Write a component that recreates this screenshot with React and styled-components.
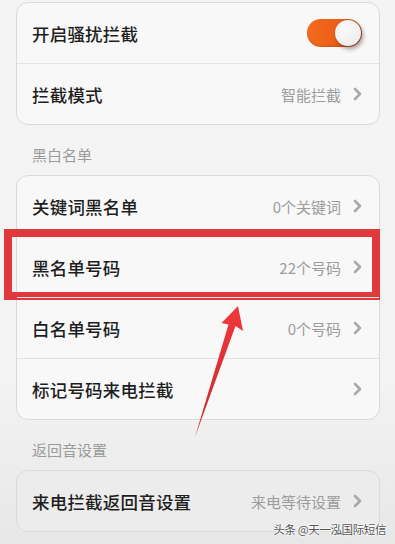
import React from 'react'
import styled, { createGlobalStyle } from 'styled-components'

const GlobalStyle = createGlobalStyle`
  html, body {
    margin: 0;
    padding: 0;
  }
  body {
    background: linear-gradient(180deg, #f4f4f4 0%, #f3f3f3 70%, #e7e7e7 100%);
    font-family: 'Noto Sans CJK SC', 'Noto Sans', sans-serif;
  }
`;

const Page = styled.div`
  position: relative;
  width: 395px;
  height: 544px;
  overflow: hidden;
  padding: 2px 15px 0 16px;
  box-sizing: border-box;
`;

const Card = styled.div`
  background: ${p => p.$tone || '#f8f8f8'};
  border: 1px solid #dadada;
  border-radius: 12px;
  display: flex;
  flex-direction: column;
`;

const Row = styled.div`
  position: relative;
  height: 60px;
  display: flex;
  align-items: center;
  justify-content: space-between;
  padding: 0 17px 0 15px;
  border-top: ${p => (p.$first ? 'none' : '1px solid #e3e3e3')};
`;

const Label = styled.span`
  font-size: 17.5px;
  font-weight: 500;
  color: #1e1e1e;
  letter-spacing: 0.2px;
`;

const Right = styled.div`
  display: flex;
  align-items: center;
  gap: 12px;
`;

const Value = styled.span`
  font-size: 15px;
  color: #9c9c9c;
`;

const SectionTitle = styled.div`
  padding: 20px 16px 10px;
  line-height: 20px;
  font-size: 15px;
  color: #9b9b9b;
`;

const Toggle = styled.div`
  position: relative;
  width: 55px;
  height: 28px;
  border-radius: 14px;
  background: linear-gradient(90deg, #f56a1c 0%, #ec5f18 55%, #b9501f 100%);
  box-shadow: inset 0 -1px 2px rgba(120, 40, 0, 0.25);
`;

const Knob = styled.div`
  position: absolute;
  top: 1px;
  right: 1px;
  width: 26px;
  height: 26px;
  border-radius: 50%;
  background: radial-gradient(circle at 40% 35%, #fafafa 0%, #e9e9ec 100%);
  box-shadow: 2px 3px 4px rgba(60, 40, 30, 0.45);
`;

const Highlight = styled.div`
  position: absolute;
  left: -13px;
  right: -1px;
  top: -8px;
  bottom: -3px;
  border: 8px solid #e0383d;
  box-sizing: border-box;
  pointer-events: none;
`;

const Arrow = styled.svg`
  position: absolute;
  left: 0;
  top: 0;
  pointer-events: none;
`;

const Watermark = styled.div`
  position: absolute;
  right: 9px;
  bottom: 7px;
  font-size: 11.5px;
  color: #555;
  text-shadow: 0 0 2px #fff, 0 0 2px #fff, 0 0 3px #fff;
  letter-spacing: -0.4px;
`;

const Chevron = () => (
  <svg width="9" height="14" viewBox="0 0 9 14">
    <path d="M2 2 L7 7 L2 12" fill="none" stroke="#a9a9a9" strokeWidth="2.6" strokeLinecap="round" strokeLinejoin="round" />
  </svg>
);

const Item = ({ label, value, first, children }) => (
  <Row $first={first}>
    <Label>{label}</Label>
    <Right>
      {value && <Value>{value}</Value>}
      <Chevron />
    </Right>
    {children}
  </Row>
);

export default function App() {
  return (
    <>
      <GlobalStyle />
      <Page>
        <Card>
          <Row $first>
            <Label>开启骚扰拦截</Label>
            <Toggle>
              <Knob />
            </Toggle>
          </Row>
          <Item label="拦截模式" value="智能拦截" />
        </Card>

        <SectionTitle>黑白名单</SectionTitle>
        <Card>
          <Item first label="关键词黑名单" value="0个关键词" />
          <Item label="黑名单号码" value="22个号码">
            <Highlight />
          </Item>
          <Item label="白名单号码" value="0个号码" />
          <Item label="标记号码来电拦截" />
        </Card>

        <SectionTitle>返回音设置</SectionTitle>
        <Card $tone="#ececec">
          <Item first label="来电拦截返回音设置" value="来电等待设置" />
        </Card>

        <Arrow width="395" height="544" viewBox="0 0 395 544">
          <defs>
            <linearGradient id="ar" x1="0" y1="1" x2="0" y2="0">
              <stop offset="0" stopColor="#c8272c" />
              <stop offset="1" stopColor="#f0383c" />
            </linearGradient>
          </defs>
          <polygon
            points="238,306 243,331 235.5,326 195,437 228.5,324.5 221.5,323"
            fill="url(#ar)"
          />
        </Arrow>

        <Watermark>头条 @天一泓国际短信</Watermark>
      </Page>
    </>
  )
}
